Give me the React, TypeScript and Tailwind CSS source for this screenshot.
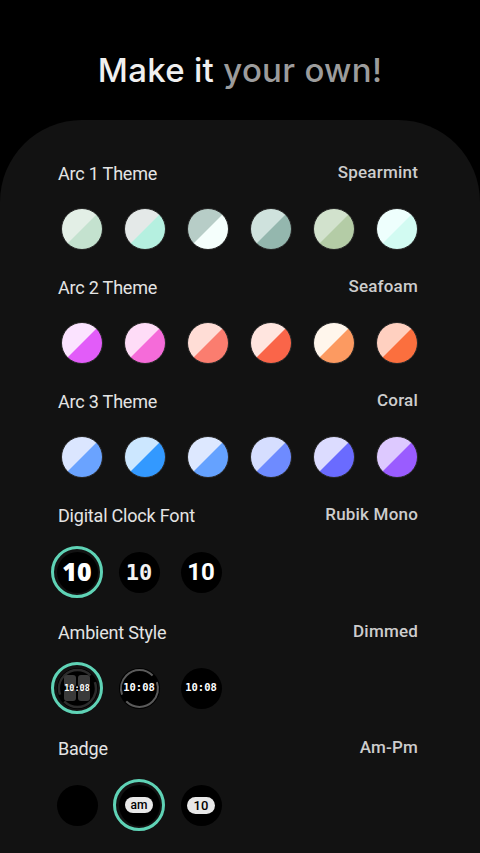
import React from "react";

type Pair = [string, string];

const themes: { label: string; value: string; colors: Pair[] }[] = [
  {
    label: "Arc 1 Theme",
    value: "Spearmint",
    colors: [
      ["#e3efe6", "#c4e2cf"],
      ["#e4e9e8", "#b5f0e0"],
      ["#b7cdc7", "#f5fffc"],
      ["#cfe2dd", "#94b7ae"],
      ["#d2e2cd", "#b4cca6"],
      ["#eefffd", "#d2fbf2"],
    ],
  },
  {
    label: "Arc 2 Theme",
    value: "Seafoam",
    colors: [
      ["#fbe3ff", "#e25cf9"],
      ["#fedcf7", "#f56bd9"],
      ["#ffddd6", "#fb7d6f"],
      ["#ffe5df", "#fa6549"],
      ["#fff6ec", "#fc9a61"],
      ["#ffd0c0", "#fb6f3e"],
    ],
  },
  {
    label: "Arc 3 Theme",
    value: "Coral",
    colors: [
      ["#dbe6ff", "#6aa3ff"],
      ["#cce7ff", "#3399ff"],
      ["#dde8ff", "#65a2ff"],
      ["#d6deff", "#6e8bff"],
      ["#dcdcff", "#6a6bff"],
      ["#ddc9ff", "#9a5cff"],
    ],
  },
];

function Header({ label, value }: { label: string; value: string }) {
  return (
    <div className="flex h-6 items-center justify-between pr-[4px]">
      <span className="text-[18px] tracking-[-0.2px] text-[#e4e4e4]">{label}</span>
      <span className="text-[17px] font-medium tracking-[0.2px] text-[#cdcdcd]">{value}</span>
    </div>
  );
}

function Swatch({ c }: { c: Pair }) {
  return (
    <div
      className="h-[42px] w-[42px] rounded-full border border-[#2a2a2a]"
      style={{ background: `linear-gradient(135deg, ${c[0]} 49.3%, ${c[1]} 50.7%)` }}
    />
  );
}

function Slot({ selected, children }: { selected?: boolean; children: React.ReactNode }) {
  return (
    <div
      className={
        "flex h-[52px] w-[52px] items-center justify-center rounded-full " +
        (selected ? "border-[3px] border-[#5fd3b6]" : "")
      }
    >
      <div className="relative flex h-[41px] w-[41px] items-center justify-center rounded-full bg-black">
        {children}
      </div>
    </div>
  );
}

function Arc({ color, width }: { color: string; width: number }) {
  return (
    <svg className="absolute inset-0" width="41" height="41" viewBox="0 0 41 41">
      <circle
        cx="20.5"
        cy="20.5"
        r="18.5"
        fill="none"
        stroke={color}
        strokeWidth={width}
        strokeDasharray="50 8 50 8"
        strokeDashoffset="-8"
        transform="rotate(-45 20.5 20.5)"
      />
    </svg>
  );
}

const clockText = "relative text-[10.5px] font-bold text-white";
const monoFont = { fontFamily: '"DejaVu Sans Mono", monospace' };

export default function App() {
  return (
    <div
      className="flex min-h-[853px] w-[480px] flex-col bg-black"
      style={{ fontFamily: 'Roboto, "Open Sans", sans-serif' }}
    >
      <div className="flex h-[120px] justify-center pt-[48px]">
        <h1
          className="text-[33px] font-medium leading-[44px] tracking-[0.3px]"
          style={{ fontFamily: 'Inter, "Open Sans", sans-serif' }}
        >
          <span className="text-[#f0f0f0]">Make it </span>
          <span className="text-[#9c9c9c]">your own!</span>
        </h1>
      </div>
      <div className="flex-1 rounded-t-[82px] bg-[#121212] pl-[58px] pr-[58px] pt-[41px]">
        {themes.map((t) => (
          <div key={t.label} className="flex flex-col pb-[25px]">
            <Header label={t.label} value={t.value} />
            <div className="mt-[23px] flex items-center justify-between pl-[3px] pr-[4px]">
              {t.colors.map((c, i) => (
                <Swatch key={i} c={c} />
              ))}
            </div>
          </div>
        ))}

        <div className="flex flex-col">
          <Header label="Digital Clock Font" value="Rubik Mono" />
          <div className="mt-[19px] flex gap-[10px] -ml-[7px]">
            <Slot selected>
              <span className="text-[25px] font-extrabold text-white" style={{ fontFamily: '"Open Sans", sans-serif' }}>
                10
              </span>
            </Slot>
            <Slot>
              <span className="text-[22px] font-bold text-[#f2f2f2]" style={monoFont}>
                10
              </span>
            </Slot>
            <Slot>
              <span className="text-[24px] font-bold text-white" style={{ fontFamily: 'Roboto, sans-serif' }}>
                10
              </span>
            </Slot>
          </div>

          <div className="mt-[22px]">
            <Header label="Ambient Style" value="Dimmed" />
          </div>
          <div className="mt-[18px] flex gap-[10px] -ml-[7px]">
            <Slot selected>
              <Arc color="#2c2c2c" width={2.5} />
              <div className="absolute grid grid-cols-2 gap-[2px]">
                <div className="h-[12px] w-[12px] rounded-[3px] bg-[#3a3a3a]" />
                <div className="h-[12px] w-[12px] rounded-[3px] bg-[#3a3a3a]" />
                <div className="h-[12px] w-[12px] rounded-[3px] bg-[#3a3a3a]" />
                <div className="h-[12px] w-[12px] rounded-[3px] bg-[#3a3a3a]" />
              </div>
              <span className="relative text-[8.5px] font-bold leading-[10px] text-white" style={monoFont}>
                10:08
              </span>
            </Slot>
            <Slot>
              <Arc color="#5a5a5a" width={2} />
              <span className={clockText} style={monoFont}>
                10:08
              </span>
            </Slot>
            <Slot>
              <span className={clockText} style={monoFont}>
                10:08
              </span>
            </Slot>
          </div>

          <div className="mt-[22px]">
            <Header label="Badge" value="Am-Pm" />
          </div>
          <div className="mt-[19px] flex gap-[10px] -ml-[7px]">
            <Slot>
              <span />
            </Slot>
            <Slot selected>
              <span className="rounded-full bg-[#e8e8e8] px-[6px] text-[12px] font-medium leading-[16px] text-black">
                am
              </span>
            </Slot>
            <Slot>
              <span className="rounded-full bg-[#e8e8e8] px-[7px] text-[13px] font-medium leading-[17px] text-black">
                10
              </span>
            </Slot>
          </div>
        </div>
      </div>
    </div>
  );
}
